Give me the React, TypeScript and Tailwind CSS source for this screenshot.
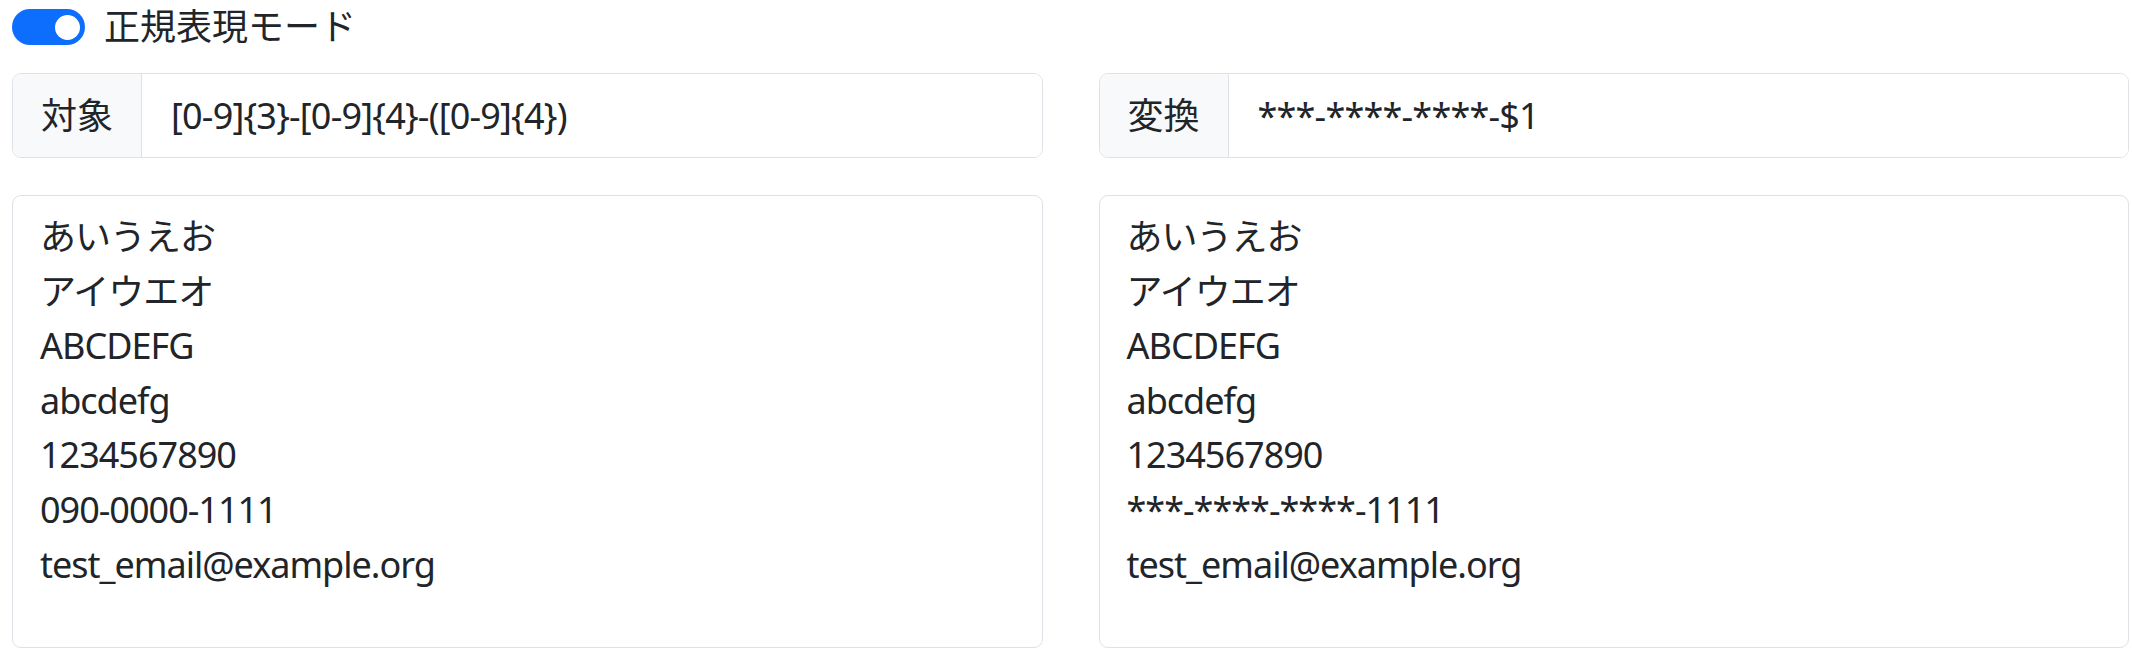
import React, { useState } from "react";

const SOURCE = [
  "あいうえお",
  "アイウエオ",
  "ABCDEFG",
  "abcdefg",
  "1234567890",
  "090-0000-1111",
  "test_email@example.org",
].join("\n");

interface FieldProps {
  label: string;
  value: string;
  onChange: (v: string) => void;
}

function InputGroup({ label, value, onChange }: FieldProps) {
  return (
    <div className="flex h-[85px] rounded-[9px] border border-[#dee2e6] overflow-hidden">
      <span className="flex items-center px-[28px] bg-[#f8f9fa] border-r border-[#dee2e6] whitespace-nowrap">
        {label}
      </span>
      <input
        value={value}
        onChange={(e) => onChange(e.target.value)}
        className="flex-1 min-w-0 px-[29px] bg-white outline-none tracking-[-0.8px]"
      />
    </div>
  );
}

export default function App() {
  const [regexMode, setRegexMode] = useState(true);
  const [target, setTarget] = useState("[0-9]{3}-[0-9]{4}-([0-9]{4})");
  const [replace, setReplace] = useState("***-****-****-$1");
  const [text, setText] = useState(SOURCE);

  let result = text;
  try {
    result = regexMode
      ? text.replace(new RegExp(target, "g"), replace)
      : text.split(target).join(replace);
  } catch {
    result = text;
  }

  return (
    <div className="min-h-screen bg-white pl-[12px] pr-[3px] text-[#212529] text-[36px] leading-[54px] font-['Noto_Sans','Noto_Sans_CJK_JP',sans-serif]">
      {/* Regex mode switch */}
      <div className="flex items-start h-[54px] mb-[19px]">
        <button
          role="switch"
          aria-checked={regexMode}
          onClick={() => setRegexMode(!regexMode)}
          className={`mt-[9px] w-[73px] h-[36px] rounded-full flex items-center px-[5px] ${
            regexMode ? "bg-[#0d6efd] justify-end" : "bg-white border border-[#dee2e6] justify-start"
          }`}
        >
          <span className={`w-[25px] h-[25px] rounded-full ${regexMode ? "bg-white" : "bg-[#dee2e6]"}`} />
        </button>
        <span className="ml-[19px]">正規表現モード</span>
      </div>

      <div className="grid grid-cols-2 gap-x-[56px]">
        <div>
          <InputGroup label="対象" value={target} onChange={setTarget} />
          <textarea
            value={text}
            onChange={(e) => setText(e.target.value)}
            rows={8}
            className="block w-full mt-[37px] h-[453px] px-[27px] pt-[14px] pb-[4px] leading-[54.6px] tracking-[-1px] rounded-[9px] border border-[#dee2e6] resize-none outline-none"
          />
        </div>
        <div>
          <InputGroup label="変換" value={replace} onChange={setReplace} />
          <textarea
            value={result}
            readOnly
            rows={8}
            className="block w-full mt-[37px] h-[453px] px-[27px] pt-[14px] pb-[4px] leading-[54.6px] tracking-[-1px] rounded-[9px] border border-[#dee2e6] resize-none outline-none"
          />
        </div>
      </div>
    </div>
  );
}
